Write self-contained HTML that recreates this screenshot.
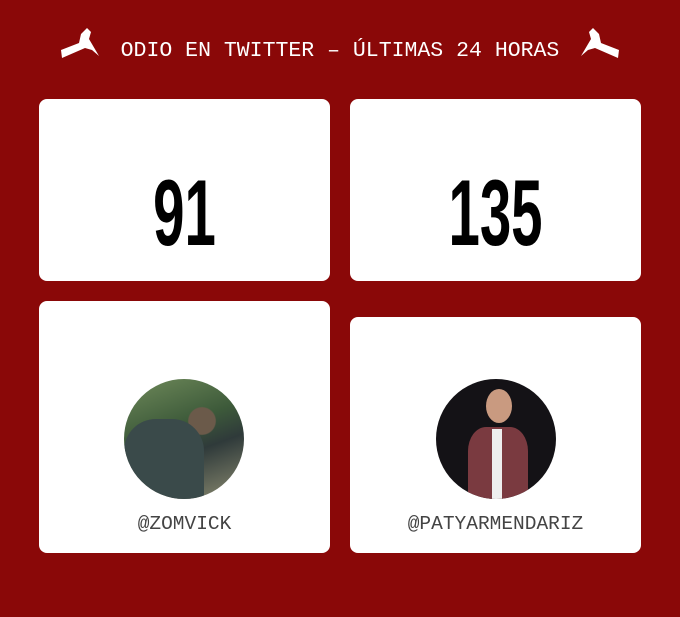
<!DOCTYPE html>
<html><head><style>
body{margin:0;width:680px;height:617px;background:#8a0808;position:relative;overflow:hidden;font-family:"Liberation Mono",monospace}
.h{position:absolute;top:36px;left:0;width:680px;text-align:center;color:#fff;font-size:21.5px;line-height:30px}
.c{position:absolute;background:#fff;border-radius:8px}
.n{position:absolute;left:0;right:0;text-align:center;font-family:"Liberation Sans",sans-serif;font-weight:bold;font-size:94px;line-height:100px;color:#000;transform:scaleX(.6)}
.av{position:absolute;width:120px;height:120px;border-radius:50%;overflow:hidden}
.u{position:absolute;left:0;right:0;top:212px;text-align:center;color:#444;font-size:19.5px}
.ic{position:absolute;top:26px}
</style></head><body>
<svg class="ic" style="left:59px" width="42" height="34" viewBox="0 0 42 34"><path d="M2 24 L20 17 L22 8 L28 2 L32 6 L30 13 L40 30 L33 24 L26 22 L3 32 Z" fill="#fff"/></svg>
<svg class="ic" style="left:579px" width="42" height="34" viewBox="0 0 42 34"><path d="M40 24 L22 17 L20 8 L14 2 L10 6 L12 13 L2 30 L9 24 L16 22 L39 32 Z" fill="#fff"/></svg>
<div class="h">ODIO EN TWITTER – ÚLTIMAS 24 HORAS</div>
<div class="c" style="left:39px;top:99px;width:291px;height:182px"><div class="n" style="top:64px">91</div></div>
<div class="c" style="left:350px;top:99px;width:291px;height:182px"><div class="n" style="top:64px">135</div></div>
<div class="c" style="left:39px;top:301px;width:291px;height:252px">
<div class="av" style="left:85px;top:78px;background:radial-gradient(circle at 65% 35%,#6b5a4a 0 12%,transparent 13%),linear-gradient(160deg,#6f8a5a,#3d5a3a 40%,#2f3a3a 60%,#8a8a70)"><div style="position:absolute;left:0;top:40px;width:80px;height:80px;background:#3a4a4a;border-radius:40% 40% 0 0"></div></div>
<div class="u">@ZOMVICK</div></div>
<div class="c" style="left:350px;top:317px;width:291px;height:236px">
<div class="av" style="left:86px;top:62px;background:#141216"><div style="position:absolute;left:50px;top:10px;width:26px;height:34px;border-radius:50%;background:#c99a80"></div><div style="position:absolute;left:32px;top:48px;width:60px;height:80px;background:#7a3a40;border-radius:30% 30% 0 0"></div><div style="position:absolute;left:56px;top:50px;width:10px;height:70px;background:#eee"></div></div>
<div class="u" style="top:196px">@PATYARMENDARIZ</div></div>
</body></html>
